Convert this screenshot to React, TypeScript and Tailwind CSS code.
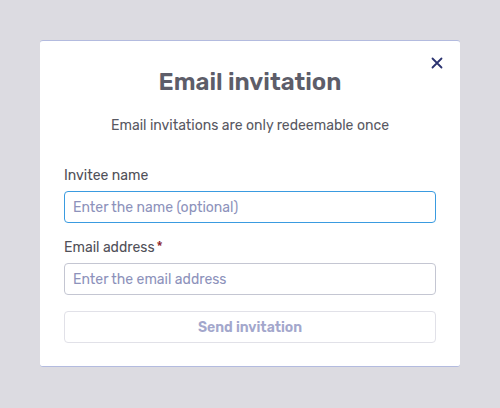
import React from "react";

export default function App() {
  return (
    <div
      className="w-[500px] h-[408px] bg-[#dcdbe1] pt-[40px] px-[40px]"
      style={{ fontFamily: "Rubik, Inter, 'Noto Sans', sans-serif" }}
    >
      <div className="relative bg-white rounded-[3px] border-t border-b border-[#b3bbdf] px-[24px] pt-[26px] pb-[24px] h-[327px]">
        <button className="absolute right-[15px] top-[14px] w-[16px] h-[16px] flex items-center justify-center text-[#2b3370]">
          <svg width="12" height="12" viewBox="0 0 12 12" fill="none">
            <path d="M1.5 1.5L10.5 10.5M10.5 1.5L1.5 10.5" stroke="currentColor" strokeWidth="1.8" strokeLinecap="round" />
          </svg>
        </button>
        <h1 className="text-center text-[24px] leading-[30px] font-semibold text-[#5d5d69]">Email invitation</h1>
        <p className="text-center text-[14px] leading-[20px] text-[#585862] mt-[19px]">
          Email invitations are only redeemable once
        </p>
        <div className="mt-[30px]">
          <label className="block text-[14px] leading-[20px] text-[#505058]">Invitee name</label>
          <input
            className="mt-[5px] w-full h-[32px] rounded-[4px] border border-[#3a9be0] px-[8px] text-[14px] outline-none placeholder:text-[#8d92bb]"
            placeholder="Enter the name (optional)"
          />
        </div>
        <div className="mt-[15px]">
          <label className="block text-[14px] leading-[20px] text-[#505058]">
            Email address<span className="text-[#8a1c2a] ml-[2px]">*</span>
          </label>
          <input
            className="mt-[5px] w-full h-[32px] rounded-[4px] border border-[#c4c6d2] px-[8px] text-[14px] outline-none placeholder:text-[#8d92bb]"
            placeholder="Enter the email address"
          />
        </div>
        <button className="mt-[16px] w-full h-[32px] rounded-[4px] border border-[#e1e1e8] text-[14px] font-semibold text-[#a3a7cc] bg-white">
          Send invitation
        </button>
      </div>
    </div>
  );
}
